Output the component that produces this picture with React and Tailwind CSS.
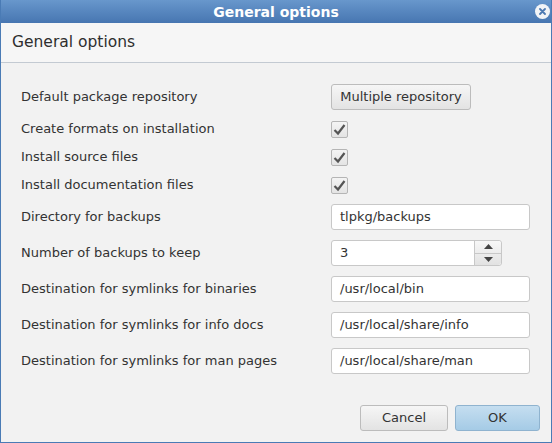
import { useState } from "react";

const font = { fontFamily: '"DejaVu Sans", Verdana, sans-serif' };

function Check() {
  return (
    <div className="w-[17px] h-[17px] rounded-[2px] border border-[#b5b5b5] bg-gradient-to-b from-[#f4f4f4] to-[#e4e4e4] flex items-center justify-center">
      <svg width="15" height="15" viewBox="0 0 15 15">
        <path d="M2.5 8 L6 11.5 L12.5 3" fill="none" stroke="#555" strokeWidth="2.2" />
      </svg>
    </div>
  );
}

function TextBox({ value }) {
  return (
    <div className="w-[199px] h-[26px] rounded-[3px] border border-[#c8c8c8] bg-white flex items-center px-[8px] text-[13px] text-[#333]">
      {value}
    </div>
  );
}

function Spinner({ value }) {
  return (
    <div className="w-[171px] h-[26px] rounded-[3px] border border-[#c8c8c8] bg-white flex">
      <div className="flex-1 flex items-center px-[8px] text-[13px] text-[#333]">{value}</div>
      <div className="w-[27px] flex flex-col border-l border-[#c8c8c8] bg-gradient-to-b from-[#f7f7f7] to-[#e2e2e2] rounded-r-[3px]">
        <div className="flex-1 flex items-center justify-center border-b border-[#c8c8c8]">
          <svg width="9" height="5" viewBox="0 0 9 5"><path d="M0 5 L4.5 0 L9 5 Z" fill="#444" /></svg>
        </div>
        <div className="flex-1 flex items-center justify-center">
          <svg width="9" height="5" viewBox="0 0 9 5"><path d="M0 0 L4.5 5 L9 0 Z" fill="#444" /></svg>
        </div>
      </div>
    </div>
  );
}

const rows = [
  { label: "Default package repository", kind: "button", h: "h-[26px]" },
  { label: "Create formats on installation", kind: "check", h: "h-[18px]" },
  { label: "Install source files", kind: "check", h: "h-[18px]" },
  { label: "Install documentation files", kind: "check", h: "h-[18px]" },
  { label: "Directory for backups", kind: "text", value: "tlpkg/backups", h: "h-[26px]" },
  { label: "Number of backups to keep", kind: "spin", value: "3", h: "h-[26px]" },
  { label: "Destination for symlinks for binaries", kind: "text", value: "/usr/local/bin", h: "h-[26px]" },
  { label: "Destination for symlinks for info docs", kind: "text", value: "/usr/local/share/info", h: "h-[26px]" },
  { label: "Destination for symlinks for man pages", kind: "text", value: "/usr/local/share/man", h: "h-[26px]" },
];

export default function App() {
  const [open] = useState(true);
  if (!open) return null;
  return (
    <div style={font} className="w-[552px] h-[443px] flex flex-col bg-[#f2f2f2] border-x border-b border-[#4a7bb5] overflow-hidden">
      <div className="h-[23px] shrink-0 bg-gradient-to-b from-[#6897cc] to-[#4776b1] flex items-center justify-center relative -mx-px">
        <span className="text-white font-bold text-[14px] leading-none">General options</span>
        <div className="absolute right-[2px] top-[4px] w-[15px] h-[15px] rounded-full bg-[#f2f4f7] flex items-center justify-center">
          <svg width="7" height="7" viewBox="0 0 7 7">
            <path d="M1 1 L6 6 M6 1 L1 6" stroke="#4d7ab2" strokeWidth="1.8" strokeLinecap="round" />
          </svg>
        </div>
      </div>
      <div className="h-[40px] shrink-0 bg-[#f6f6f6] border-b border-[#c3cad2] flex items-center pl-[11px] text-[15.5px] text-[#2e2e2e]">
        General options
      </div>
      <div className="flex flex-col gap-[10px] pt-[21px] pl-[20px] text-[13px] text-[#333]">
        {rows.map((r) => (
          <div key={r.label} className={`flex items-center ${r.h}`}>
            <div className="w-[310px]">{r.label}</div>
            {r.kind === "button" && (
              <div className="w-[140px] h-[26px] rounded-[3px] border border-[#bcbcbc] bg-gradient-to-b from-[#f6f6f6] to-[#e3e3e3] flex items-center justify-center text-[13px] text-[#333]">
                Multiple repository
              </div>
            )}
            {r.kind === "check" && <Check />}
            {r.kind === "text" && <TextBox value={r.value} />}
            {r.kind === "spin" && <Spinner value={r.value} />}
          </div>
        ))}
      </div>
      <div className="flex justify-end gap-[7px] pr-[11px] mt-[31px] text-[13px] text-[#333]">
        <div className="w-[88px] h-[26px] rounded-[3px] border border-[#bcbcbc] bg-gradient-to-b from-[#f6f6f6] to-[#e3e3e3] flex items-center justify-center">
          Cancel
        </div>
        <div className="w-[85px] h-[26px] rounded-[3px] border border-[#8fb3cf] bg-gradient-to-b from-[#c5def0] to-[#a5cbe6] flex items-center justify-center">
          OK
        </div>
      </div>
    </div>
  );
}
